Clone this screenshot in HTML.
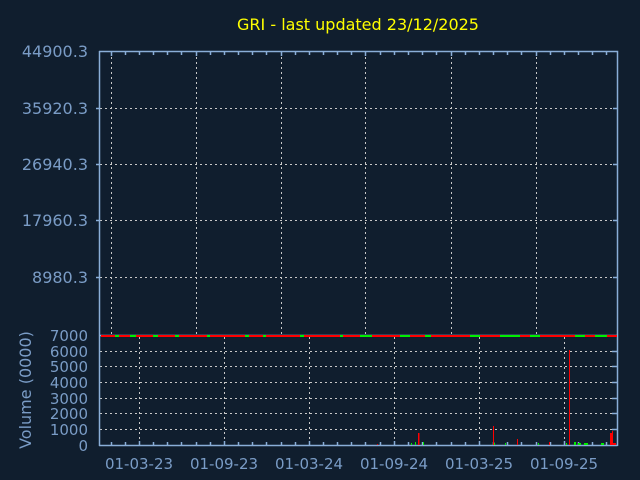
<!DOCTYPE html>
<html><head><meta charset="utf-8"><style>
html,body{margin:0;padding:0;background:#101e2e;}
svg{display:block;font-family:"DejaVu Sans","Liberation Sans",sans-serif;}
</style></head><body>
<svg width="640" height="480" viewBox="0 0 640 480">
<rect width="640" height="480" fill="#101e2e"/>
<text x="358" y="30" fill="#ffff00" font-size="16" text-anchor="middle">GRI - last updated 23/12/2025</text>
<g fill="#7a9cc6" font-size="16" text-anchor="end">
<text x="88" y="57">44900.3</text>
<text x="88" y="114">35920.3</text>
<text x="88" y="170">26940.3</text>
<text x="88" y="226">17960.3</text>
<text x="88" y="283">8980.3</text>
</g>
<g fill="#7a9cc6" font-size="15" text-anchor="end">
<text x="88" y="341">7000</text>
<text x="88" y="357">6000</text>
<text x="88" y="372">5000</text>
<text x="88" y="388">4000</text>
<text x="88" y="404">3000</text>
<text x="88" y="419">2000</text>
<text x="88" y="435">1000</text>
<text x="88" y="451">0</text>
</g>
<text transform="translate(31,390) rotate(-90)" fill="#7a9cc6" font-size="16" text-anchor="middle">Volume (0000)</text>
<g fill="#7a9cc6" font-size="15" text-anchor="middle">
<text x="139" y="469">01-03-23</text>
<text x="224" y="469">01-09-23</text>
<text x="309" y="469">01-03-24</text>
<text x="394" y="469">01-09-24</text>
<text x="479" y="469">01-03-25</text>
<text x="564" y="469">01-09-25</text>
</g>
<g stroke="#c8c8c8" stroke-width="1" stroke-dasharray="2,3" fill="none">
<path d="M111.5 52V335M196.5 52V335M281.5 52V335M365.5 52V335M451.5 52V335M536.5 52V335"/>
<path d="M100 108.5H617M100 164.5H617M100 220.5H617M100 277.5H617"/>
<path d="M139.5 337V445M224.5 337V445M309.5 337V445M394.5 337V445M479.5 337V445M564.5 337V445"/>
<path d="M100 351.5H617M100 366.5H617M100 382.5H617M100 398.5H617M100 413.5H617M100 429.5H617"/>
</g>
<g stroke="#8aaed8" stroke-width="1.5" fill="none">
<path d="M99.5 51V446M99 51.5H617.5V446M99 445.5H617.5M99 335.5H617"/>
<path d="M111.5 52v4M125.5 52v3M139.5 52v3M153.5 52v3M167.5 52v3M181.5 52v3M196.5 52v4M210.5 52v3M224.5 52v3M238.5 52v3M252.5 52v3M266.5 52v3M281.5 52v4M295.5 52v3M309.5 52v3M323.5 52v3M337.5 52v3M351.5 52v3M365.5 52v4M380.5 52v3M394.5 52v3M408.5 52v3M422.5 52v3M436.5 52v3M451.5 52v4M465.5 52v3M479.5 52v3M493.5 52v3M507.5 52v3M521.5 52v3M536.5 52v4M550.5 52v3M564.5 52v3M578.5 52v3M592.5 52v3M606.5 52v3"/>
<path d="M111.5 445v-3M125.5 445v-3M139.5 445v-4M153.5 445v-3M167.5 445v-3M181.5 445v-3M196.5 445v-3M210.5 445v-3M224.5 445v-4M238.5 445v-3M252.5 445v-3M266.5 445v-3M281.5 445v-3M295.5 445v-3M309.5 445v-4M323.5 445v-3M337.5 445v-3M351.5 445v-3M365.5 445v-3M380.5 445v-3M394.5 445v-4M408.5 445v-3M422.5 445v-3M436.5 445v-3M451.5 445v-3M465.5 445v-3M479.5 445v-4M493.5 445v-3M507.5 445v-3M521.5 445v-3M536.5 445v-3M550.5 445v-3M564.5 445v-4M578.5 445v-3M592.5 445v-3M606.5 445v-3"/>
<path d="M100 108.5h-4M100 164.5h-4M100 220.5h-4M100 277.5h-4M617 108.5h-4M617 164.5h-4M617 220.5h-4M617 277.5h-4"/>
<path d="M617 351.5h-5M617 366.5h-5M617 382.5h-5M617 398.5h-5M617 413.5h-5M617 429.5h-5"/>
</g>
<rect x="101" y="335" width="516" height="2" fill="#ff0000"/>
<g fill="#00ee00">
<rect x="115" y="335" width="4" height="2"/><rect x="130" y="335" width="6" height="2"/><rect x="153" y="335" width="5" height="2"/><rect x="175" y="335" width="4" height="2"/><rect x="207" y="335" width="3" height="2"/><rect x="245" y="335" width="4" height="2"/><rect x="263" y="335" width="3" height="2"/><rect x="300" y="335" width="4" height="2"/><rect x="340" y="335" width="3" height="2"/><rect x="360" y="335" width="12" height="2"/><rect x="400" y="335" width="10" height="2"/><rect x="425" y="335" width="6" height="2"/><rect x="470" y="335" width="10" height="2"/><rect x="500" y="335" width="20" height="2"/><rect x="530" y="335" width="10" height="2"/><rect x="575" y="335" width="10" height="2"/><rect x="595" y="335" width="12" height="2"/>
</g>
<g fill="#ff0000">
<rect x="377" y="444" width="1" height="1"/><rect x="418" y="433" width="1.5" height="12"/><rect x="493" y="426" width="1" height="19"/><rect x="517" y="439" width="1" height="6"/><rect x="549" y="442" width="1" height="3"/><rect x="569" y="350" width="1" height="95"/><rect x="610" y="433" width="2" height="12"/><rect x="612" y="431" width="1" height="14"/><rect x="613" y="443" width="3" height="2"/>
</g>
<g fill="#00ee00">
<rect x="411" y="443" width="1" height="2"/><rect x="415" y="442" width="1" height="3"/><rect x="423" y="442" width="1" height="3"/><rect x="494" y="443" width="1" height="2"/><rect x="505" y="443" width="1" height="2"/><rect x="538" y="443" width="1" height="2"/><rect x="566" y="443" width="1" height="2"/><rect x="574" y="442" width="2" height="3"/><rect x="578" y="443" width="3" height="2"/><rect x="584" y="443" width="4" height="2"/><rect x="601" y="443" width="3" height="2"/>
</g>
</svg>
</body></html>
